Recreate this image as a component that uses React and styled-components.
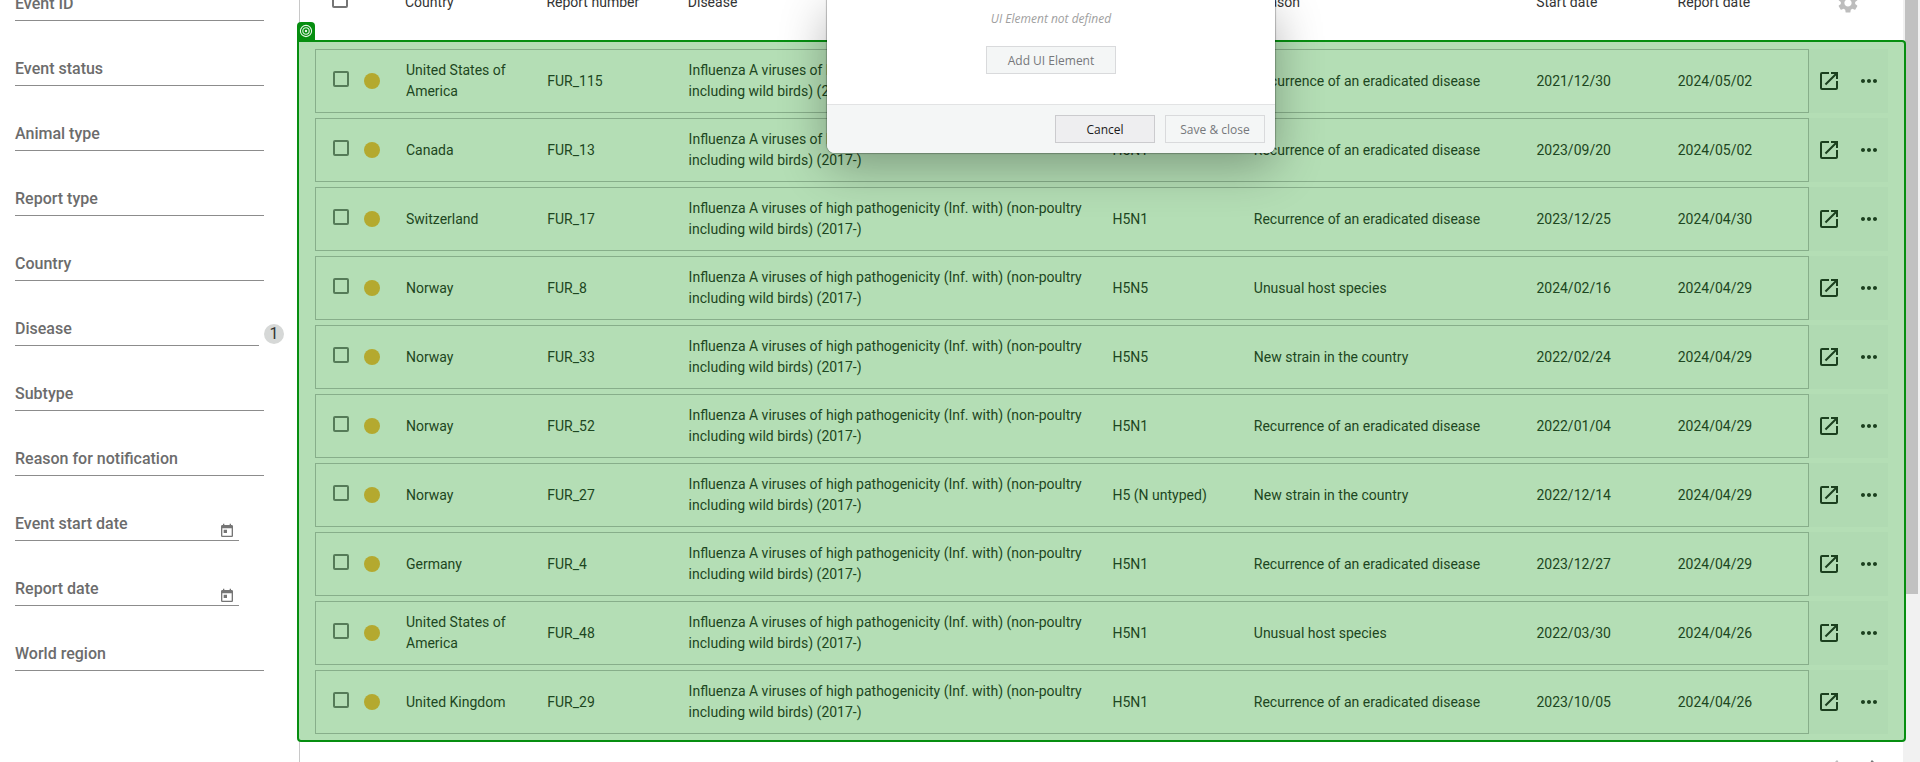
import React from "react";
import styled, { createGlobalStyle, css } from "styled-components";
import {
  MdToday,
  MdSettings,
  MdOpenInNew,
  MdMoreHoriz,
  MdChevronLeft,
  MdChevronRight,
} from "react-icons/md";

const GlobalStyle = createGlobalStyle`
  *, *::before, *::after { box-sizing: border-box; }
  html, body, #root { height: 100%; }
  body {
    margin: 0;
    overflow: hidden;
    background: #fff;
    font-family: Roboto, "Liberation Sans", sans-serif;
    font-size: 14px;
    color: #333;
  }
  button, input { font: inherit; color: inherit; }
`;

const Page = styled.div`
  display: flex;
  height: 100vh;
  overflow: hidden;
  position: relative;
`;

const Sidebar = styled.aside`
  flex: 0 0 300px;
  padding-left: 15px;
  border-right: 1px solid #c8c8c8;
`;

const FilterList = styled.form`
  display: flex;
  flex-direction: column;
  margin-top: -44px;
`;

const FieldRow = styled.div`
  display: flex;
  align-items: flex-end;
  gap: 5px;
  height: 65px;
`;

const Field = styled.div`
  display: grid;
  grid-template-columns: 1fr auto;
  align-items: center;
  width: ${(p) => p.$width}px;
  height: 33px;
  border-bottom: 1px solid #8c8c8c;
`;

const FieldLabel = styled.label`
  grid-area: 1 / 1;
  font-size: 16px;
  line-height: 32px;
  font-weight: 500;
  color: #6c6c6c;
  white-space: nowrap;
  pointer-events: none;
`;

const FieldInput = styled.input`
  grid-area: 1 / 1;
  width: 100%;
  height: 32px;
  padding: 0;
  border: 0;
  outline: 0;
  background: transparent;
`;

const IconButton = styled.button`
  display: flex;
  padding: 0;
  border: 0;
  background: transparent;
  color: ${(p) => p.$color || "inherit"};
  cursor: pointer;
`;

const CalendarButton = styled(IconButton)`
  grid-area: 1 / 2;
  padding: 14px 4px 0 0;
`;

const CountBadge = styled.span`
  width: 20px;
  height: 20px;
  margin-bottom: 2px;
  border-radius: 50%;
  background: #d6d8d7;
  font-size: 16px;
  line-height: 20px;
  text-align: center;
`;

const Main = styled.main`
  flex: 1;
  min-width: 0;
`;

const Table = styled.table`
  display: block;
  line-height: 21px;
  text-align: left;
`;

const rowGrid = css`
  display: grid;
  grid-template-columns: 81px 1fr 1fr 3fr 1fr 2fr 1fr 1fr 79px;
`;

const TableHead = styled.thead`
  display: block;
  height: 76px;
  margin-top: -36px;
  padding: 0 15px 0 14px;
`;

const HeadRow = styled.tr`
  ${rowGrid}
  height: 76px;
`;

const HeadCell = styled.th`
  display: flex;
  align-items: center;
  padding: 0 0 0 ${(p) => (p.$select ? 18 : 10)}px;
  font-weight: 400;
`;

const HeadTools = styled.td`
  display: flex;
  align-items: center;
  padding: 2px 0 0 27px;
`;

const TableBody = styled.tbody`
  display: flex;
  flex-direction: column;
  gap: 5px;
  position: relative;
  z-index: 1;
  margin: 0 -3px;
  padding: 7px 16px 6px;
  border: 2px solid #068e10;
  border-radius: 0 4px 4px 4px;
  background: #b4deb5;
  color: #1d4621;
`;

const BodyRow = styled.tr`
  ${rowGrid}
  min-height: 64px;
`;

const Cell = styled.td`
  display: flex;
  align-items: center;
  padding: 0 8px 0 10px;
  border: solid #87ae8a;
  border-width: 1px 0;

  &:nth-last-child(2) { border-right-width: 1px; }
`;

const SelectCell = styled(Cell)`
  gap: 15px;
  padding: 0 0 0 17px;
  border-left-width: 1px;
`;

const ActionCell = styled.td`
  display: flex;
  align-items: center;
  gap: 16px;
  padding: 0 0 0 8px;
  background: #b0dab2;
  color: #1b3f1e;
`;

const Checkbox = styled.input.attrs({ type: "checkbox" })`
  appearance: none;
  width: 16px;
  height: 16px;
  margin: 0 0 4px;
  border: 2px solid ${(p) => (p.$onGreen ? "#557b58" : "#757575")};
  border-radius: 2px;
`;

const StatusDot = styled.span`
  width: 16px;
  height: 16px;
  border-radius: 50%;
  background: #b4a92f;
`;

const RegionTag = styled.span`
  position: absolute;
  left: -2px;
  top: -20px;
  display: flex;
  align-items: center;
  justify-content: center;
  width: 18px;
  height: 18px;
  border-radius: 4px 4px 0 0;
  background: #068e10;
`;

const TagCell = styled.td`
  padding: 0;
`;

const TagRow = styled.tr`
  position: absolute;
  left: 0;
  top: 0;
`;

const Pager = styled.nav`
  display: flex;
  justify-content: flex-end;
  gap: 15px;
  padding: 12px 17px 0 0;
`;

const ScrollTrack = styled.div`
  flex: 0 0 17px;
  padding: 0 2px;
  background: #f1f1f1;
`;

const ScrollThumb = styled.div`
  height: 78%;
  background: #c1c1c1;
`;

const Dialog = styled.section`
  position: absolute;
  z-index: 2;
  top: 0;
  left: 827px;
  width: 448px;
  border-radius: 0 0 8px 8px;
  background: #fff;
  box-shadow: 0 0 1px 1px rgba(0, 0, 0, 0.25), 0 14px 48px rgba(0, 0, 0, 0.3);
  font-family: "Open Sans", "Noto Sans", sans-serif;
  font-size: 12px;
  overflow: hidden;
`;

const DialogBody = styled.div`
  display: flex;
  flex-direction: column;
  align-items: center;
  gap: 18px;
  height: 104px;
  padding-top: 10px;
`;

const EmptyNote = styled.p`
  margin: 0;
  line-height: 18px;
  font-style: italic;
  color: #a0a0a0;
`;

const DialogFooter = styled.footer`
  display: flex;
  justify-content: flex-end;
  gap: 10px;
  padding: 10px;
  border-top: 1px solid #e2e3e4;
  background: #f4f6f6;
`;

const DialogButton = styled.button`
  width: ${(p) => (p.$wide ? 130 : 100)}px;
  height: 28px;
  padding: 0;
  border: 1px solid ${(p) => (p.$strong ? "#cbcbce" : "#d9dadc")};
  background: ${(p) => (p.$strong ? "#eeeef0" : "#f4f6f6")};
  color: ${(p) => (p.$strong ? "#1a1a1a" : "#76787b")};
`;

const filters = [
  { id: "event-id", label: "Event ID" },
  { id: "event-status", label: "Event status" },
  { id: "animal-type", label: "Animal type" },
  { id: "report-type", label: "Report type" },
  { id: "country", label: "Country" },
  { id: "disease", label: "Disease", count: 1 },
  { id: "subtype", label: "Subtype" },
  { id: "reason", label: "Reason for notification" },
  { id: "event-start", label: "Event start date", date: true },
  { id: "report-date", label: "Report date", date: true },
  { id: "world-region", label: "World region" },
];

const columns = ["Country", "Report number", "Disease", "Subtype", "Reason", "Start date", "Report date"];

const disease =
  "Influenza A viruses of high pathogenicity (Inf. with) (non-poultry including wild birds) (2017-)";
const recurrence = "Recurrence of an eradicated disease";

const reports = [
  ["United States of America", "FUR_115", "H5N1", recurrence, "2021/12/30", "2024/05/02"],
  ["Canada", "FUR_13", "H5N1", recurrence, "2023/09/20", "2024/05/02"],
  ["Switzerland", "FUR_17", "H5N1", recurrence, "2023/12/25", "2024/04/30"],
  ["Norway", "FUR_8", "H5N5", "Unusual host species", "2024/02/16", "2024/04/29"],
  ["Norway", "FUR_33", "H5N5", "New strain in the country", "2022/02/24", "2024/04/29"],
  ["Norway", "FUR_52", "H5N1", recurrence, "2022/01/04", "2024/04/29"],
  ["Norway", "FUR_27", "H5 (N untyped)", "New strain in the country", "2022/12/14", "2024/04/29"],
  ["Germany", "FUR_4", "H5N1", recurrence, "2023/12/27", "2024/04/29"],
  ["United States of America", "FUR_48", "H5N1", "Unusual host species", "2022/03/30", "2024/04/26"],
  ["United Kingdom", "FUR_29", "H5N1", recurrence, "2023/10/05", "2024/04/26"],
];

function TargetIcon() {
  return (
    <svg width="14" height="14" viewBox="0 0 14 14" fill="none" stroke="#e6f6e7" aria-hidden="true">
      <circle cx="7" cy="7" r="5.6" strokeWidth="1.1" />
      <circle cx="7" cy="7" r="3.2" strokeWidth="1.1" />
      <circle cx="7" cy="7" r="1.2" fill="#e6f6e7" stroke="none" />
    </svg>
  );
}

function Filter({ id, label, count, date }) {
  const width = date ? 224 : count ? 244 : 249;
  return (
    <FieldRow>
      <Field $width={width}>
        <FieldInput id={id} type="text" />
        <FieldLabel htmlFor={id}>{label}</FieldLabel>
        {date && (
          <CalendarButton type="button" $color="#757575" aria-label={`Choose ${label}`}>
            <MdToday size={16} />
          </CalendarButton>
        )}
      </Field>
      {count && <CountBadge>{count}</CountBadge>}
    </FieldRow>
  );
}

function ReportRow({ report }) {
  const [country, number, subtype, reason, start, reported] = report;
  return (
    <BodyRow>
      <SelectCell>
        <Checkbox $onGreen aria-label={`Select ${number}`} />
        <StatusDot />
      </SelectCell>
      <Cell>{country}</Cell>
      <Cell>{number}</Cell>
      <Cell>{disease}</Cell>
      <Cell>{subtype}</Cell>
      <Cell>{reason}</Cell>
      <Cell>{start}</Cell>
      <Cell>{reported}</Cell>
      <ActionCell>
        <IconButton type="button" aria-label={`Open ${number}`}>
          <MdOpenInNew size={24} />
        </IconButton>
        <IconButton type="button" aria-label={`More for ${number}`}>
          <MdMoreHoriz size={24} />
        </IconButton>
      </ActionCell>
    </BodyRow>
  );
}

export default function App() {
  return (
    <>
      <GlobalStyle />
      <Page>
        <Sidebar>
          <FilterList>
            {filters.map((f) => (
              <Filter key={f.id} {...f} />
            ))}
          </FilterList>
        </Sidebar>
        <Main>
          <Table>
            <TableHead>
              <HeadRow>
                <HeadCell $select>
                  <Checkbox aria-label="Select all" />
                </HeadCell>
                {columns.map((c) => (
                  <HeadCell key={c}>{c}</HeadCell>
                ))}
                <HeadTools>
                  <IconButton type="button" $color="#bdbdbd" aria-label="Table settings">
                    <MdSettings size={24} />
                  </IconButton>
                </HeadTools>
              </HeadRow>
            </TableHead>
            <TableBody>
              <TagRow>
                <TagCell>
                  <RegionTag>
                    <TargetIcon />
                  </RegionTag>
                </TagCell>
              </TagRow>
              {reports.map((r) => (
                <ReportRow key={r[1]} report={r} />
              ))}
            </TableBody>
          </Table>
          <Pager aria-label="Pages">
            <IconButton type="button" $color="#bdbdbd" aria-label="Previous page">
              <MdChevronLeft size={24} />
            </IconButton>
            <IconButton type="button" $color="#757575" aria-label="Next page">
              <MdChevronRight size={24} />
            </IconButton>
          </Pager>
        </Main>
        <ScrollTrack>
          <ScrollThumb />
        </ScrollTrack>
        <Dialog role="dialog" aria-label="UI Element">
          <DialogBody>
            <EmptyNote>UI Element not defined</EmptyNote>
            <DialogButton type="button" $wide>
              Add UI Element
            </DialogButton>
          </DialogBody>
          <DialogFooter>
            <DialogButton type="button" $strong>
              Cancel
            </DialogButton>
            <DialogButton type="button">Save &amp; close</DialogButton>
          </DialogFooter>
        </Dialog>
      </Page>
    </>
  );
}
